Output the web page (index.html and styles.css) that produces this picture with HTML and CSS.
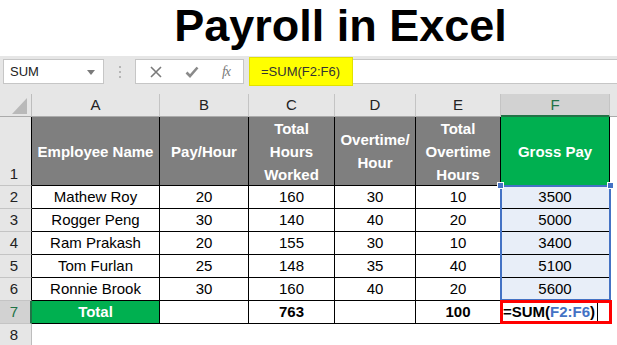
FILE: index.html
```html
<!DOCTYPE html>
<html>
<head>
<meta charset="utf-8">
<link rel="stylesheet" href="styles.css">
</head>
<body>
<div class="title">Payroll in Excel</div>
<div class="toolbar">
  <div class="namebox"><span>SUM</span>
    <svg class="dd" width="8" height="5" viewBox="0 0 8 5"><polygon points="0,0 8,0 4,5" fill="#7a7a7a"/></svg>
  </div>
  <div class="dots"><i></i><i></i><i></i></div>
  <div class="btns">
    <svg width="12" height="12" viewBox="0 0 12 12"><path d="M1 1 L11 11 M11 1 L1 11" stroke="#7a7a7a" stroke-width="1.6" fill="none"/></svg>
    <svg width="14" height="12" viewBox="0 0 14 12"><path d="M1.5 6.5 L5 10 L12.5 1.5" stroke="#8a8a8a" stroke-width="2.6" fill="none"/></svg>
    <span class="fx">fx</span>
  </div>
  <div class="fbar"><div class="fhl">=SUM(F2:F6)</div></div>
</div>
<div class="sheet">
  <div class="sel"><i class="h hl"></i><i class="h hr"></i></div>
  <div class="grid">
    <div class="corner"><svg width="15" height="16" viewBox="0 0 15 16"><polygon points="15,0 15,16 0,16" fill="#b9b9b9"/></svg></div>
    <div class="ch">A</div><div class="ch">B</div><div class="ch">C</div><div class="ch">D</div><div class="ch">E</div><div class="ch chs">F</div><div class="ch chg"></div>

    <div class="rh rh1">1</div>
    <div class="c hd">Employee Name</div>
    <div class="c hd">Pay/Hour</div>
    <div class="c hd">Total<br>Hours<br>Worked</div>
    <div class="c hd">Overtime/<br>Hour</div>
    <div class="c hd">Total<br>Overtime<br>Hours</div>
    <div class="c hd green">Gross Pay</div>
    <div class="g"></div>

    <div class="rh">2</div><div class="c">Mathew Roy</div><div class="c">20</div><div class="c">160</div><div class="c">30</div><div class="c">10</div><div class="c f">3500</div><div class="g"></div>
    <div class="rh">3</div><div class="c">Rogger Peng</div><div class="c">30</div><div class="c">140</div><div class="c">40</div><div class="c">20</div><div class="c f">5000</div><div class="g"></div>
    <div class="rh">4</div><div class="c">Ram Prakash</div><div class="c">20</div><div class="c">155</div><div class="c">30</div><div class="c">10</div><div class="c f">3400</div><div class="g"></div>
    <div class="rh">5</div><div class="c">Tom Furlan</div><div class="c">25</div><div class="c">148</div><div class="c">35</div><div class="c">40</div><div class="c f">5100</div><div class="g"></div>
    <div class="rh">6</div><div class="c">Ronnie Brook</div><div class="c">30</div><div class="c">160</div><div class="c">40</div><div class="c">20</div><div class="c f">5600</div><div class="g"></div>

    <div class="rh rhs">7</div>
    <div class="c green b">Total</div>
    <div class="c"></div>
    <div class="c b">763</div>
    <div class="c"></div>
    <div class="c b">100</div>
    <div class="c edit"><b>=SUM(<span class="ref">F2:F6</span>)</b><i class="caret"></i></div>
    <div class="g"></div>

    <div class="rh rh8">8</div>
    <div class="g"></div><div class="g"></div><div class="g"></div><div class="g"></div><div class="g"></div><div class="g"></div><div class="g"></div>
  </div>
</div>
</body>
</html>
```
FILE: styles.css
```css
* { box-sizing: border-box; }
html, body { margin: 0; padding: 0; }
body {
  width: 617px;
  height: 345px;
  overflow: hidden;
  background: #fff;
  font-family: "Liberation Sans", Arial, sans-serif;
  color: #000;
}
.title {
  height: 56px;
  padding-left: 64px;
  text-align: center;
  font-weight: bold;
  font-size: 45px;
  line-height: 51px;
  color: #000;
}
.toolbar {
  height: 38px;
  background: #e6e6e6;
  display: flex;
  align-items: flex-start;
  padding-top: 3px;
  padding-left: 3px;
}
.namebox {
  width: 101px;
  height: 25px;
  background: #fff;
  border: 1px solid #c6c6c6;
  display: flex;
  align-items: center;
  justify-content: space-between;
  padding: 0 8px 0 6px;
  font-size: 13px;
  color: #222;
}
.dd { margin-top: 1px; }
.dots {
  width: 31px;
  height: 25px;
  display: flex;
  flex-direction: column;
  align-items: center;
  justify-content: center;
  gap: 3px;
}
.dots i {
  display: block;
  width: 2px;
  height: 2px;
  background: #b5b5b5;
}
.btns {
  width: 109px;
  height: 25px;
  background: #fff;
  border: 1px solid #c6c6c6;
  display: flex;
  align-items: center;
  justify-content: space-between;
  padding: 0 13px 0 14px;
}
.fx {
  font-family: "Liberation Serif", "Times New Roman", serif;
  font-style: italic;
  font-size: 14px;
  color: #7a7a7a;
  letter-spacing: -1px;
}
.fbar {
  flex: 1;
  height: 25px;
  margin-left: 5px;
  margin-right: -5px;
  background: #fff;
  border: 1px solid #c6c6c6;
}
.fhl {
  width: 104px;
  height: 29px;
  margin: -3px 0 0 -1px;
  background: #ffff00;
  border: 1px solid #e2e200;
  padding-left: 11px;
  font-size: 13px;
  line-height: 27px;
  color: #333;
}
.sheet {
  position: relative;
  height: 251px;
}
.grid {
  display: grid;
  grid-template-columns: 32px 128px 89px 86px 81px 85px 109px 1fr;
  grid-template-rows: 23px 69px 23px 23px 23px 23px 23px 23px 21px;
  font-size: 15px;
}
.corner {
  background: #e6e6e6;
  border-right: 1px solid #bdbdbd;
  border-bottom: 1px solid #ababab;
  display: flex;
  align-items: flex-end;
  justify-content: flex-end;
  padding: 0 4px 2px 0;
}
.corner svg { display: block; }
.ch {
  background: #e6e6e6;
  border-right: 1px solid #c4c4c4;
  border-bottom: 1px solid #ababab;
  text-align: center;
  line-height: 22px;
  color: #222;
}
.chs {
  background: #d2d2d2;
  color: #217346;
  border-bottom: 2px solid #217346;
  line-height: 21px;
}
.chg { border-right: none; }
.rh {
  background: #e6e6e6;
  border-right: 1px solid #000;
  border-bottom: 1px solid #c4c4c4;
  text-align: center;
  line-height: 22px;
  color: #222;
  padding-right: 3px;
}
.rh1 {
  display: flex;
  align-items: flex-end;
  justify-content: center;
}
.rhs {
  background: #d2d2d2;
  color: #217346;
  border-right: 2px solid #217346;
  padding-right: 2px;
}
.rh8 {
  border-right: 1px solid #bdbdbd;
  border-bottom: none;
}
.c {
  border-right: 1px solid #000;
  border-bottom: 1px solid #000;
  text-align: center;
  line-height: 22px;
  white-space: nowrap;
}
.hd {
  background: #7f7f7f;
  color: #fff;
  font-weight: bold;
  display: flex;
  align-items: center;
  justify-content: center;
  line-height: 23px;
}
.green {
  background: #00b050;
  color: #fff;
}
.b { font-weight: bold; }
.f { background: #e8eef8; }
.g { background: #fff; }
.edit {
  position: relative;
  text-align: left;
  padding-left: 2px;
  display: flex;
  align-items: center;
  z-index: 2;
}
.edit b { font-weight: bold; }
.ref { color: #4472c4; }
.caret {
  display: block;
  width: 1px;
  height: 18px;
  margin-left: 2px;
  background: #000;
}
.edit::after {
  content: "";
  position: absolute;
  top: -1px;
  left: -1px;
  right: -3px;
  bottom: -1px;
  border: 3px solid #ff0000;
}
.sel {
  position: absolute;
  left: 500px;
  top: 91px;
  width: 111px;
  height: 116px;
  border: 2px solid #4472c4;
  z-index: 1;
}
.h {
  position: absolute;
  top: -5px;
  width: 7px;
  height: 7px;
  background: #4472c4;
  border: 1px solid #fff;
}
.hl { left: -5px; }
.hr { right: -5px; }
```
